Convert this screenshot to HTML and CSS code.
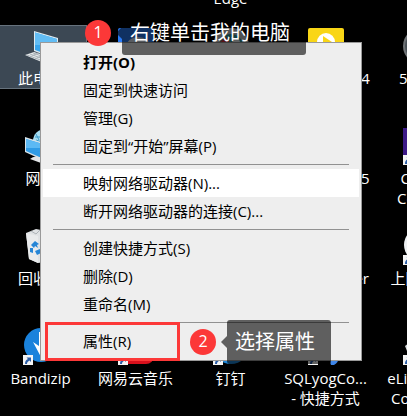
FILE: index.html
```html
<!DOCTYPE html>
<html lang="zh-CN">
<head>
  <meta charset="UTF-8" />
  <meta name="viewport" content="width=device-width, initial-scale=1.0"/>
  <title>此电脑</title>
  <link rel="stylesheet" href="styles.css">
</head>
<body>
  <svg class="defs" width="0" height="0">
    <symbol id="shortcut" viewBox="0 0 10 10">
      <rect width="10" height="10" fill="#f4f4f4"/>
      <path d="M2 9c0-3 1-4 3-5L3.500 2.500H8V7L6.500 5.500C5 6.500 4 7 4 9z" fill="#2b5ea8"/>
    </symbol>
  </svg>

  <!-- 桌面图标 -->
  <main class="desktop">
    <button class="shortcut col-3">
      <svg class="icon" viewBox="0 0 36 36"></svg>
      <span>Microsoft Edge</span>
    </button>

    <button class="shortcut col-1 selected">
      <svg class="icon" viewBox="0 0 36 36">
        <path d="M11 3l24 7v22l-24-9z" fill="#dfeaf0"/>
        <path d="M12 4.500l22 6.500v19l-22-8z" fill="#39a5ec"/>
        <path d="M12 4.500l22 6.500v6L12 17z" fill="#62bdf5"/>
        <path d="M2 27l9-3 16 5-6 6z" fill="#e6e9eb"/>
        <path d="M4 27l16 6M7 26l16 6M10 25l14 5M7 29l8-4M12 31l8-4" stroke="#a9b2b8" stroke-width="1" fill="none"/>
      </svg>
      <span>此电脑</span>
    </button>
    <button class="shortcut col-2">
      <svg class="icon" viewBox="0 0 36 36">
        <rect width="36" height="36" rx="2" fill="#2a7bf6"/>
        <path d="M7 20q3-11 13-11t14 11z" fill="#dce6f2"/>
        <path d="M13 19q3-5 7-4t7 5z" fill="#4b6f9e"/>
      </svg>
      <span>会议</span>
    </button>
    <button class="shortcut col-3">
      <svg class="icon" viewBox="0 0 36 36">
        <circle cx="18" cy="18" r="18" fill="#c9cdd0"/>
        <circle cx="18" cy="18" r="12" fill="#2c9aa0"/>
        <path d="M7 14l6-5 5 7z" fill="#d8343a"/>
        <path d="M18 9l8 2 2 6-8-1z" fill="#e9eef0"/>
      </svg>
      <span>浏览器</span>
    </button>
    <button class="shortcut col-4">
      <svg class="icon" viewBox="0 0 36 36">
        <rect width="36" height="36" rx="2" fill="#f9d616"/>
        <circle cx="18" cy="14" r="9" fill="#fff"/>
        <path d="M15 8l9 6-9 6z" fill="#f9d616"/>
      </svg>
      <span>PotPlayer-64</span>
    </button>
    <button class="shortcut col-5">
      <svg class="icon" viewBox="0 0 36 36">
        <circle cx="18" cy="18" r="18" fill="#6f7376"/>
        <circle cx="18" cy="18" r="16" fill="#4a5157"/>
      </svg>
      <span>56717</span>
    </button>

    <button class="shortcut col-1">
      <svg class="icon" viewBox="0 0 36 36">
        <circle cx="22" cy="13" r="12" fill="#a7dcf0"/>
        <path d="M13 6l3 6M18 4l3 7M13 12l6 2M12 9h8" stroke="#3c9ac8" fill="none"/>
        <path d="M2 9l22 7v18L2 24z" fill="#d7e3ea"/>
        <path d="M3 11l20 6v15L3 23z" fill="#2f9be6"/>
        <path d="M3 11l20 6v3L3 20z" fill="#5cb9f4"/>
        <path d="M7 31q5-5 14 0l-3 4z" fill="#e2e5e7"/>
      </svg>
      <span>网络</span>
    </button>
    <button class="shortcut col-4">
      <svg class="icon" viewBox="0 0 36 36"></svg>
      <span>Office 20155</span>
    </button>
    <button class="shortcut col-5">
      <svg class="icon" viewBox="0 0 36 36">
        <rect width="36" height="36" fill="#3d1a87"/>
        <path d="M4 10h6M4 13h6M4 16h6M4 19h6M4 22h6M4 25h6" stroke="#d8cdf0" fill="none"/>
        <use href="#shortcut" x="0" y="27" width="10" height="10"/>
      </svg>
      <span>Client<br>Center</span>
    </button>

    <button class="shortcut col-1">
      <svg class="icon" viewBox="0 0 36 36">
        <path d="M3 5l10-4 20 4-4 28-14 2-9-4z" fill="#dfe2e4"/>
        <path d="M3 5l12 3v27l-9-4z" fill="#e9ebec"/>
        <path d="M8 3l5 3 4-4 4 5" stroke="#aeb4b8" fill="none"/>
        <path d="M8 17l4-4 4 3-2 1 1 3-3-2-1 2zM7 20l3 0 0 5-3-1zM12 23l5-2 1 4-4 2zM17 14l3 1 0 4-3-1z" fill="#2585d6"/>
      </svg>
      <span>回收站</span>
    </button>
    <button class="shortcut col-4">
      <svg class="icon" viewBox="0 0 36 36"></svg>
      <span>Code Center</span>
    </button>
    <button class="shortcut col-5">
      <svg class="icon" viewBox="0 0 36 36">
        <circle cx="18" cy="17" r="17" fill="#eef1f3"/>
        <circle cx="18" cy="17" r="13" fill="#2b8be0"/>
        <use href="#shortcut" x="0" y="27" width="10" height="10"/>
      </svg>
      <span>上网助手</span>
    </button>

    <button class="shortcut col-1">
      <svg class="icon" viewBox="0 0 36 36">
        <circle cx="18" cy="17" r="17" fill="#1a82dc"/>
        <path d="M16 4h5v12h7L18 29 10 14l6 4z" fill="#fff"/>
        <use href="#shortcut" x="0" y="27" width="10" height="10"/>
      </svg>
      <span>Bandizip</span>
    </button>
    <button class="shortcut col-2">
      <svg class="icon" viewBox="0 0 36 36">
        <rect width="36" height="36" rx="8" fill="#d8101c"/>
        <use href="#shortcut" x="0" y="27" width="10" height="10"/>
      </svg>
      <span>网易云音乐</span>
    </button>
    <button class="shortcut col-3">
      <svg class="icon" viewBox="0 0 36 36">
        <circle cx="18" cy="18" r="18" fill="#1d86d8"/>
        <use href="#shortcut" x="0" y="27" width="10" height="10"/>
      </svg>
      <span>钉钉</span>
    </button>
    <button class="shortcut col-4">
      <svg class="icon" viewBox="0 0 36 36">
        <path d="M23 37q-2-4 1-7h7q-1 5-5 7z" fill="#3f86e8"/>
        <use href="#shortcut" x="0" y="27" width="10" height="10"/>
      </svg>
      <span>SQLyogCo...<br>- 快捷方式</span>
    </button>
    <button class="shortcut col-5">
      <svg class="icon" viewBox="0 0 36 36">
        <path d="M2 18l8-6v14l-6-3z" fill="#d9dcde"/>
        <use href="#shortcut" x="0" y="27" width="10" height="10"/>
      </svg>
      <span>eLicenser<br>Controls</span>
    </button>
  </main>

  <!-- 右键菜单 -->
  <nav class="menu">
    <button class="item default">打开(O)</button>
    <button class="item">固定到快速访问</button>
    <button class="item">管理(G)</button>
    <button class="item">固定到“开始”屏幕(P)</button>
    <hr>
    <button class="item active">映射网络驱动器(N)...</button>
    <button class="item">断开网络驱动器的连接(C)...</button>
    <hr>
    <button class="item">创建快捷方式(S)</button>
    <button class="item">删除(D)</button>
    <button class="item">重命名(M)</button>
    <hr>
    <button class="item marked">属性(R)</button>
  </nav>

  <!-- 步骤标注 -->
  <div class="step step-1">
    <span class="number">1</span>
    <span class="tip">右键单击我的电脑</span>
  </div>
  <div class="step step-2">
    <span class="number">2</span>
    <span class="tip">选择属性</span>
  </div>
</body>
</html>
```

FILE: styles.css
```css
body {
  margin: 0;
  height: 100vh;
  position: relative;
  overflow: hidden;
  background: #000;
  font-family: "Open Sans", "Noto Sans CJK SC", sans-serif;
  font-size: 15px;
}

button {
  font: inherit;
  background: none;
  border: none;
  cursor: default;
}

.defs {
  position: absolute;
}

.desktop {
  display: grid;
  grid-template-columns: repeat(5, 93px);
  grid-auto-rows: 100px;
  column-gap: 2px;
  align-items: start;
  margin: -75px 0 0 -6px;
}

.col-1 { grid-column: 1; }
.col-2 { grid-column: 2; }
.col-3 { grid-column: 3; }
.col-4 { grid-column: 4; }
.col-5 { grid-column: 5; }

.shortcut {
  display: flex;
  flex-direction: column;
  align-items: center;
  gap: 4px;
  padding: 2px 0 0;
  border: 1px solid transparent;
  color: #fff;
  line-height: 20px;
  text-align: center;
}

.shortcut.selected {
  background: #3c4854;
  border-color: #66727d;
}

.icon {
  width: 36px;
  height: 36px;
  overflow: visible;
}

.menu {
  position: absolute;
  top: 42px;
  left: 40px;
  width: 316px;
  padding: 5px 2px;
  background: #eee;
  border: 1px solid #999;
}

.menu hr {
  margin: 4px 10px;
  border: none;
  border-top: 1px solid #919191;
}

.item {
  display: block;
  position: relative;
  width: 100%;
  height: 28px;
  padding: 0 40px;
  color: #000;
  line-height: 28px;
  text-align: left;
  white-space: nowrap;
}

.item.default {
  font-weight: bold;
}

.item.active {
  background: #fff;
}

.item.marked::after {
  content: "";
  position: absolute;
  top: -5px;
  left: 2px;
  width: 129px;
  height: 33px;
  border: 3px solid #fc3838;
}

.step {
  position: absolute;
  display: flex;
  align-items: center;
  gap: 11px;
  color: #fff;
}

.step-1 {
  top: 11px;
  left: 85px;
}

.step-2 {
  top: 320px;
  left: 190px;
}

.number {
  width: 26px;
  height: 26px;
  border-radius: 50%;
  background: #fc3838;
  font-size: 16px;
  line-height: 24px;
  text-align: center;
}

.tip {
  position: relative;
  padding: 0 16px 0 8px;
  background: rgba(0, 0, 0, 0.6);
  border-radius: 3px;
  font-size: 20px;
  line-height: 44px;
  white-space: nowrap;
}

.tip::before {
  content: "";
  position: absolute;
  top: 16px;
  left: -6px;
  border: 6px solid transparent;
  border-left: none;
  border-right-color: rgba(0, 0, 0, 0.6);
}
```
